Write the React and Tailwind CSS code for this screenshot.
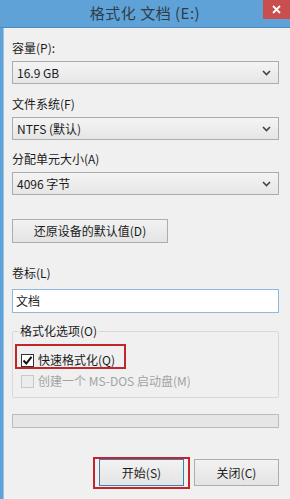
const font = { fontFamily: '"Noto Sans CJK SC", "Liberation Sans", sans-serif' };

const Chevron = () => (
  <svg width="9" height="6" viewBox="0 0 9 6" className="shrink-0">
    <path d="M1 1 L4.5 4.5 L8 1" fill="none" stroke="#444" strokeWidth="1.6" />
  </svg>
);

const Combo = ({ value, className = '' }) => (
  <div
    className={`flex items-center justify-between h-[23px] w-[267px] border border-[#acacac] bg-gradient-to-b from-[#f4f4f4] to-[#e6e6e6] pl-[4px] pr-[7px] text-[12px] text-[#1b1b1b] ${className}`}
  >
    <span>{value}</span>
    <Chevron />
  </div>
);

const Label = ({ children, className = '' }) => (
  <div className={`h-[16px] leading-[16px] text-[12px] text-[#1b1b1b] ${className}`}>{children}</div>
);

export default function App() {
  return (
    <div className="w-[290px] h-[499px] flex flex-col bg-[#f0f0f0] overflow-hidden" style={font}>
      {/* title bar */}
      <div className="relative h-[28px] shrink-0 bg-[#5fa2d8] border-b border-[#4a8cc4] flex items-center justify-center">
        <span className="text-[15px] text-[#2f3d49] tracking-[0.5px]">格式化 文档 (E:)</span>
        <div className="absolute right-0 top-0 w-[27px] h-[19px] bg-[#c94f4f] flex items-center justify-center">
          <svg width="9" height="9" viewBox="0 0 9 9">
            <path d="M1 1 L8 8 M8 1 L1 8" stroke="#fff" strokeWidth="1.8" />
          </svg>
        </div>
      </div>

      <div className="flex flex-1">
        <div className="w-[4px] shrink-0 bg-[#5fa2d8] border-r border-[#9cc4e6]" />
        <div className="flex-1 flex flex-col pl-[8px] pt-[12px]">
          <Label>容量(P):</Label>
          <Combo value="16.9 GB" className="mt-[5px]" />

          <Label className="mt-[12px]">文件系统(F)</Label>
          <Combo value="NTFS (默认)" className="mt-[5px]" />

          <Label className="mt-[11px]">分配单元大小(A)</Label>
          <Combo value="4096 字节" className="mt-[5px]" />

          <div className="mt-[24px] w-[156px] h-[24px] border border-[#adadad] bg-gradient-to-b from-[#f2f2f2] to-[#e4e4e4] flex items-center justify-center text-[12px] text-[#1b1b1b]">
            还原设备的默认值(D)
          </div>

          <Label className="mt-[22px]">卷标(L)</Label>
          <div className="mt-[8px] w-[267px] h-[24px] border border-[#8fb8e0] bg-white flex items-center pl-[3px] text-[12px] text-[#1b1b1b]">
            文档
          </div>

          {/* group box */}
          <div className="relative mt-[18px] w-[267px] h-[67px] border border-[#d9d9d9] rounded-[2px]">
            <span className="absolute -top-[9px] left-[6px] px-[1px] bg-[#f0f0f0] text-[12px] leading-[16px] text-[#1b1b1b]">
              格式化选项(O)
            </span>
            <div className="absolute left-[2px] top-[12px] w-[111px] h-[25px] border-2 border-[#c0262c]" />
            <div className="flex flex-col pl-[8px] pt-[20px]">
              <div className="flex items-center gap-[4px] h-[16px]">
                <div className="relative w-[13px] h-[13px] border border-[#333] bg-white flex items-center justify-center">
                  <svg width="11" height="11" viewBox="0 0 11 11">
                    <path d="M1.5 5.5 L4.3 8.5 L9.5 1.8" fill="none" stroke="#111" strokeWidth="2" />
                  </svg>
                </div>
                <span className="text-[12px] text-[#1b1b1b]">快速格式化(Q)</span>
              </div>
              <div className="flex items-center gap-[4px] h-[16px] mt-[5px]">
                <div className="w-[13px] h-[13px] border border-[#c8c8c8] bg-[#ececec]" />
                <span className="text-[12px] text-[#a3a3a3]">创建一个 MS-DOS 启动盘(M)</span>
              </div>
            </div>
          </div>

          {/* progress */}
          <div className="mt-[16px] w-[267px] h-[14px] border border-[#bcbcbc] bg-[#e6e6e6]" />

          {/* buttons */}
          <div className="mt-[31px] w-[267px] flex justify-end gap-[10px]">
            <div className="relative">
              <div className="absolute -left-[6px] -top-[2px] w-[97px] h-[32px] border-2 border-[#c0262c]" />
              <div className="w-[85px] h-[27px] border border-[#3c7fb1] bg-gradient-to-b from-[#f2f2f2] to-[#e4e4e4] flex items-center justify-center text-[12px] text-[#1b1b1b]">
                开始(S)
              </div>
            </div>
            <div className="w-[85px] h-[27px] border border-[#adadad] bg-gradient-to-b from-[#f2f2f2] to-[#e4e4e4] flex items-center justify-center text-[12px] text-[#1b1b1b]">
              关闭(C)
            </div>
          </div>
        </div>
      </div>
    </div>
  );
}
